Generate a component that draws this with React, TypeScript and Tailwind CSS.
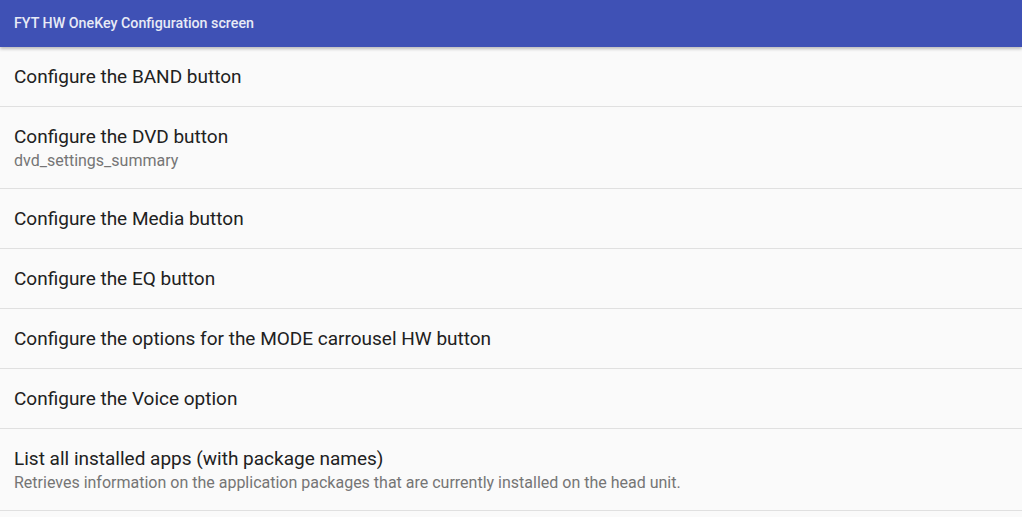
const items: { title: string; summary?: string }[] = [
  { title: "Configure the BAND button" },
  { title: "Configure the DVD button", summary: "dvd_settings_summary" },
  { title: "Configure the Media button" },
  { title: "Configure the EQ button" },
  { title: "Configure the options for the MODE carrousel HW button" },
  { title: "Configure the Voice option" },
  {
    title: "List all installed apps (with package names)",
    summary:
      "Retrieves information on the application packages that are currently installed on the head unit.",
  },
];

export default function App() {
  return (
    <div className="h-[517px] w-[1022px] overflow-hidden bg-[#fafafa] font-['Roboto',sans-serif]">
      <header className="relative z-10 flex h-[47px] items-center bg-[#3f51b5] px-[14px] shadow-[0_2px_3px_rgba(0,0,0,0.25)]">
        <h1 className="pt-px text-[14.25px] font-medium text-[#e8eaf6]">
          FYT HW OneKey Configuration screen
        </h1>
      </header>

      <ul>
        {items.map((item) => (
          <li
            key={item.title}
            className={`flex flex-col justify-center border-b border-[#e0e0e0] px-[14px] ${
              item.summary ? "h-[82px]" : "h-[60px]"
            }`}
          >
            <p className="text-[19px] leading-[26px] text-[#212121]">{item.title}</p>
            {item.summary && (
              <p className="text-[16px] leading-[22px] text-[#757575]">{item.summary}</p>
            )}
          </li>
        ))}
      </ul>
    </div>
  );
}
